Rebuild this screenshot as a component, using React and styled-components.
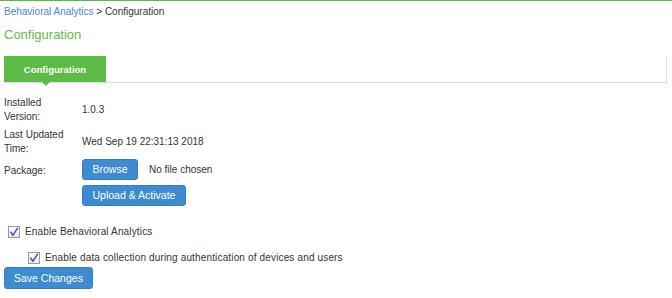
import React from "react";
import styled, { createGlobalStyle } from "styled-components";

const GlobalStyle = createGlobalStyle`
  html, body {
    margin: 0;
    padding: 0;
    background: #fff;
  }
  body {
    font-family: "Liberation Sans", Arial, sans-serif;
    color: #333;
  }
`;

export default function App() {
  return (
    <>
      <GlobalStyle />
      <Page>
        <Breadcrumb>
          <CrumbLink>Behavioral Analytics</CrumbLink> &gt; Configuration
        </Breadcrumb>
        <Title>Configuration</Title>
        <TabBar>
          <Tab>Configuration</Tab>
        </TabBar>
        <Form>
          <Row>
            <Label>
              Installed
              <br />
              Version:
            </Label>
            <Value>1.0.3</Value>
          </Row>
          <Row>
            <Label>
              Last Updated
              <br />
              Time:
            </Label>
            <Value>Wed Sep 19 22:31:13 2018</Value>
          </Row>
          <Row $top>
            <Label $pad>Package:</Label>
            <Stack>
              <FileLine>
                <Button>Browse</Button>
                <FileName>No file chosen</FileName>
              </FileLine>
              <Button>Upload &amp; Activate</Button>
            </Stack>
          </Row>
        </Form>
        <Check $indent={4} $mt={19}>
          <Box />
          Enable Behavioral Analytics
        </Check>
        <Check $indent={24} $mt={12}>
          <Box />
          Enable data collection during authentication of devices and users
        </Check>
        <SaveButton>Save Changes</SaveButton>
      </Page>
    </>
  );
}

function Box() {
  return (
    <CheckBox>
      <svg width="10" height="10" viewBox="0 0 10 10">
        <path
          d="M1.8 5.2 L4 8.2 L8.6 1.2"
          fill="none"
          stroke="#3a55b8"
          strokeWidth="1.5"
          strokeLinecap="round"
          strokeLinejoin="round"
        />
      </svg>
    </CheckBox>
  );
}

const Page = styled.div`
  width: 672px;
  height: 298px;
  box-sizing: border-box;
  border-top: 1px solid #5cb946;
  padding: 0 5px 0 4px;
  font-size: 10px;
  overflow: hidden;
`;

const Breadcrumb = styled.div`
  margin-top: 4px;
  height: 14px;
  line-height: 14px;
  color: #333;
`;

const CrumbLink = styled.span`
  color: #4a86c5;
`;

const Title = styled.div`
  margin-top: 8px;
  font-size: 13px;
  line-height: 16px;
  color: #62b946;
`;

const TabBar = styled.div`
  margin-top: 13px;
  display: flex;
  height: 26px;
  border-right: 1px solid #dcdcdc;
  border-bottom: 1px solid #dcdcdc;
`;

const Tab = styled.div`
  position: relative;
  width: 102px;
  height: 26px;
  background: #5dbb47;
  color: #fff;
  font-weight: bold;
  font-size: 9.5px;
  display: flex;
  align-items: center;
  justify-content: center;

  &::after {
    content: "";
    position: absolute;
    left: 38px;
    bottom: -4px;
    border-left: 4px solid transparent;
    border-right: 4px solid transparent;
    border-top: 4px solid #5dbb47;
  }
`;

const Form = styled.div`
  margin-top: 13px;
  display: flex;
  flex-direction: column;
  gap: 4px;
`;

const Row = styled.div`
  display: flex;
  align-items: ${(p) => (p.$top ? "flex-start" : "center")};
`;

const Label = styled.div`
  width: 78px;
  line-height: 14px;
  padding-top: ${(p) => (p.$pad ? "4px" : "0")};
`;

const Value = styled.div`
  line-height: 14px;
`;

const Stack = styled.div`
  display: flex;
  flex-direction: column;
  align-items: flex-start;
  gap: 5px;
  margin-top: -1px;
`;

const FileLine = styled.div`
  display: flex;
  align-items: center;
  gap: 11px;
`;

const FileName = styled.span`
  color: #333;
`;

const Button = styled.button`
  font-family: "Liberation Sans", Arial, sans-serif;
  font-size: 10.5px;
  color: #fff;
  background: #3d8bd1;
  border: 1px solid #3580c4;
  border-radius: 3px;
  height: 21px;
  padding: 0 9.5px;
  line-height: 19px;
`;

const SaveButton = styled(Button)`
  display: block;
  margin-top: 2px;
  height: 22px;
  padding: 0 9px;
`;

const Check = styled.label`
  display: flex;
  align-items: center;
  gap: 5px;
  margin-left: ${(p) => p.$indent}px;
  margin-top: ${(p) => p.$mt}px;
  line-height: 14px;
  letter-spacing: 0.15px;
`;

const CheckBox = styled.span`
  width: 10px;
  height: 10px;
  border: 1px solid #9a9a9a;
  background: linear-gradient(#fdfdfd, #e6e6e6);
  display: inline-flex;
  align-items: center;
  justify-content: center;
`;
